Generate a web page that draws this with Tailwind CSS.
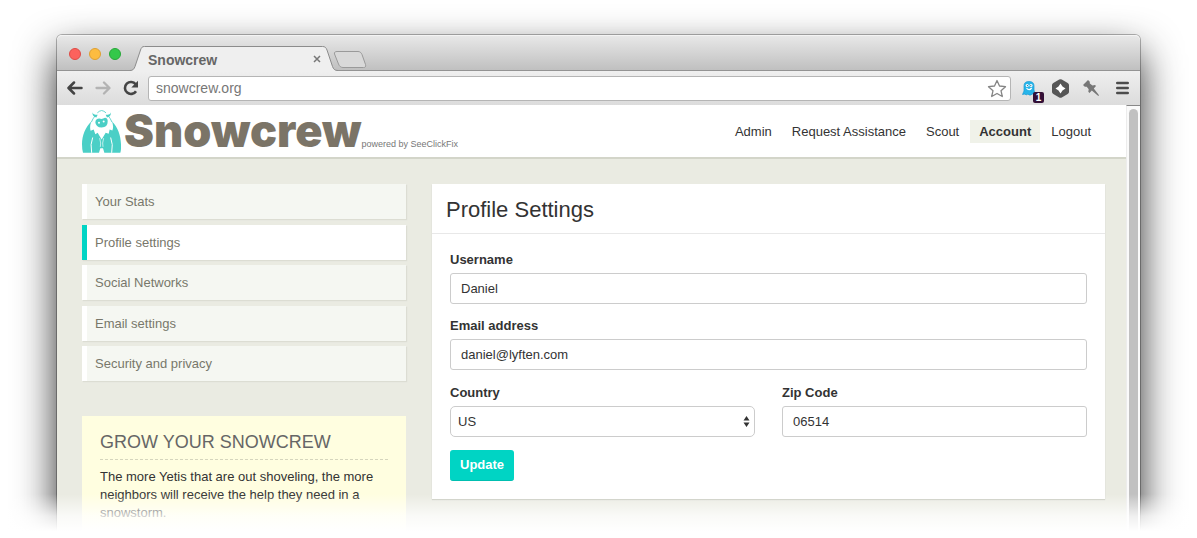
<!DOCTYPE html>
<html lang="en">
<head>
<meta charset="utf-8">
<meta name="viewport" content="width=device-width, initial-scale=1">
<title>Snowcrew</title>
<script src="https://cdn.jsdelivr.net/npm/@tailwindcss/browser@4"></script>
</head>
<body class="relative h-screen overflow-hidden bg-white px-[57px] pt-[35px] font-['Liberation_Sans',Arial,sans-serif] text-[13px] text-[#333]">

<div class="flex h-full flex-col rounded-t-[5px] bg-[#eaebe2] shadow-[0_18px_40px_rgba(0,0,0,0.85),0_0_0_1px_rgba(0,0,0,0.28)]">

  <!-- Title bar -->
  <div class="flex h-9 shrink-0 items-start rounded-t-[5px] border-b border-[#939393] bg-linear-to-b from-[#e9e9e9] to-[#c0c0c0] pl-3 shadow-[inset_0_1px_0_#f4f4f4]">
    <div class="flex gap-2 pt-[13px]">
      <span class="size-3 rounded-full border border-[#de4c46] bg-[#fc625d]"></span>
      <span class="size-3 rounded-full border border-[#dfa032] bg-[#fdbc40]"></span>
      <span class="size-3 rounded-full border border-[#27a838] bg-[#34c84a]"></span>
    </div>
    <div class="relative mt-[11px] ml-[9px] flex h-[25px] w-[208px] items-center justify-between pr-[17px] pl-[18px]">
      <svg class="absolute inset-0 h-full w-full" viewBox="0 0 208 25" aria-hidden="true">
        <path d="M0 25V24.500C3 24.500 4 23 5 20.500L10.500 4C11.500 1.500 12 .5 14.500 .5H192.500C195 .5 196 1.500 197 4L202.500 20.500C203.500 23 204.500 24.500 208 24.500V25Z" fill="#efefef"/>
        <path d="M0 24.500C3 24.500 4 23 5 20.500L10.500 4C11.500 1.500 12 .5 14.500 .5H192.500C195 .5 196 1.500 197 4L202.500 20.500C203.500 23 204.500 24.500 208 24.500" fill="none" stroke="#8c8c8c"/>
      </svg>
      <span class="relative pt-[3px] text-sm font-bold text-[#666]">Snowcrew</span>
      <button type="button" aria-label="Close tab" class="relative">
        <svg class="size-2" viewBox="0 0 8 8"><path d="M1 1L7 7M7 1L1 7" stroke="#777" stroke-width="1.500"/></svg>
      </button>
    </div>
    <button type="button" aria-label="New tab" class="mt-4 -ml-[5px]">
      <svg class="h-[17px] w-[34px]" viewBox="0 0 34 17"><path d="M4 .5H25C27 .5 28 1.500 29 3.500L32.500 13.500C33 15.500 32.500 16.500 30.500 16.500H10C8 16.500 6.500 15.500 5.500 13L1.500 3C1 1.500 2 .5 4 .5Z" fill="#d9d9d9" stroke="#9a9a9a"/></svg>
    </button>
  </div>

  <!-- Toolbar -->
  <div class="flex h-[34px] shrink-0 items-center bg-linear-to-b from-[#efefef] to-[#dcdcdc] pr-[11px] pl-[10px]">
    <div class="flex gap-3">
      <button type="button" aria-label="Back"><svg class="size-4" viewBox="0 0 16 16" fill="none" stroke="#444" stroke-width="2.500" stroke-linecap="round" stroke-linejoin="round"><path d="M7 2.500L1.500 8L7 13.500M2 8H14.500"/></svg></button>
      <button type="button" aria-label="Forward"><svg class="size-4" viewBox="0 0 16 16" fill="none" stroke="#b3b3b3" stroke-width="2.300" stroke-linecap="round" stroke-linejoin="round"><path d="M9 2.500L14.500 8L9 13.500M14 8H1.500"/></svg></button>
      <button type="button" aria-label="Reload"><svg class="size-4" viewBox="0 0 16 16"><path d="M12.700 4.300A6 6 0 1 0 13 11.200" fill="none" stroke="#444" stroke-width="2.600"/><path d="M15 .8V7.500H8.300Z" fill="#444"/></svg></button>
    </div>
    <div class="mr-[11px] ml-[9px] flex h-[25px] flex-1 items-center rounded-[3px] border border-[#b5b5b5] bg-white pr-[3px] pl-[7px]">
      <input type="text" aria-label="Address" value="snowcrew.org" class="min-w-0 flex-1 bg-transparent text-sm text-[#777] outline-none">
      <button type="button" aria-label="Bookmark this page"><svg class="h-[19px] w-5" viewBox="0 0 20 19"><path d="M10 1.500L12.500 7L18.500 7.700L14 11.700L15.300 17.500L10 14.500L4.700 17.500L6 11.700L1.500 7.700L7.500 7Z" fill="#fff" stroke="#858585" stroke-width="1.300" stroke-linejoin="round"/></svg></button>
    </div>
    <button type="button" aria-label="Ghost extension, 1 alert" class="relative mr-[14px]">
      <svg class="h-[15px] w-4" viewBox="0 0 16 15"><path d="M2 5C2 2 3.500 .5 7 .5S12 2 12 5V9L13 13H10L9 14H7L6 13L4 14L3 13L.5 13.500L2 10Z" fill="#27b5ea" stroke="#1b9ad2" stroke-width=".7"/><circle cx="5.200" cy="4.500" r="1.500" fill="#fff"/><circle cx="9" cy="4.500" r="1.500" fill="#fff"/><circle cx="5.400" cy="4.600" r=".6" fill="#14607f"/><circle cx="8.800" cy="4.600" r=".6" fill="#14607f"/><path d="M4.500 7Q7 10.300 9.700 7" fill="none" stroke="#fff" stroke-width="1.200"/></svg>
      <span class="absolute top-[11px] left-[11px] h-[11px] w-[11px] rounded-[2px] bg-[#330f36] text-center text-[10px] leading-[11px] font-bold text-white">1</span>
    </button>
    <button type="button" aria-label="Hexagon extension" class="mr-[14px]"><svg class="h-[19px] w-[17px]" viewBox="0 0 17 19"><path d="M7.200 .6Q8.500 0 9.800 .6L15.700 4Q17 4.800 17 6V13Q17 14.200 15.700 15L9.800 18.400Q8.500 19 7.200 18.400L1.300 15Q0 14.200 0 13V6Q0 4.800 1.300 4Z" fill="#565656"/><path d="M8.500 4.500L10.500 7.500L13.500 9.500L10.500 11.500L8.500 14.500L6.500 11.500L3.500 9.500L6.500 7.500Z" fill="#fff"/></svg></button>
    <button type="button" aria-label="Pin extension" class="mr-[17px]"><svg class="size-4" viewBox="0 0 16 16"><path d="M5 0L6.800 1.800V3.500L9.500 5.500L12 5L13 6L10.800 8.600L16 15.300L15.300 16L8.800 10.600L6.500 13L5.300 11.800L5.700 9.300L3.700 6.700H1.800L0 5Z" fill="#777"/></svg></button>
    <button type="button" aria-label="Menu"><svg class="h-[14px] w-[13px]" viewBox="0 0 13 14"><path d="M1.300 2H11.700M1.300 7H11.700M1.300 12H11.700" stroke="#4c4c4c" stroke-width="2.600" stroke-linecap="round"/></svg></button>
  </div>

  <div class="flex min-h-0 flex-1">
    <div class="min-w-0 flex-1">
      <!-- Site header -->
      <header class="flex h-[54px] items-center justify-between border-b-2 border-[#d3d5c9] bg-white pr-[26px] pl-[25px]">
        <a href="#" class="flex items-center" aria-label="Snowcrew, powered by SeeClickFix">
          <svg class="h-[43px] w-[39px]" viewBox="66 30 117 128" aria-hidden="true">
            <path d="M94 66Q98 56 106 46M112 38Q118 32 125 31Q132 32 138 38M144 46Q152 56 156 66" fill="none" stroke="#4bcfc6" stroke-width="2.500"/>
            <path d="M98 36Q98 44 113 44L109 52Q95 48 98 36ZM152 36Q152 44 137 44L141 52Q155 48 152 36Z" fill="#4bcfc6"/>
            <path d="M94 64C76 82 66 106 66 132Q66 148 69 158H117Q119 150 121 144H129Q131 150 133 158H181Q184 148 183 132C182 106 174 82 156 64Q162 80 157 91L149 88L146 101L137 98L125 118L113 98L106 102L101 88L92 92Q88 80 94 64Z" fill="#4bcfc6"/>
            <path d="M98 112Q90 132 95 158M152 112Q160 132 155 158" fill="none" stroke="#fff" stroke-width="3"/>
            <path d="M119 114Q124 130 121 140M131 114Q126 130 129 140" fill="none" stroke="#fff" stroke-width="2"/>
            <path d="M106 66Q107 55 118 55Q126 58 135 53Q144 54 143 65Q143 82 125 82Q107 81 106 66Z" fill="#4bcfc6"/>
            <circle cx="117" cy="68" r="3" fill="#fff"/><circle cx="131" cy="64" r="3" fill="#fff"/>
          </svg>
          <span class="ml-[3px] flex items-baseline">
            <span class="font-['Inter','Liberation_Sans',sans-serif] text-[45px] leading-[44px] font-black text-[#7b7467]">Snowcrew</span>
            <span class="text-[9px] text-[#777]">powered by SeeClickFix</span>
          </span>
        </a>
        <nav class="flex gap-[2px] leading-[23px]">
          <a href="#" class="px-[9px]">Admin</a>
          <a href="#" class="px-[9px]">Request Assistance</a>
          <a href="#" class="px-[9px]">Scout</a>
          <a href="#" class="bg-[#f0f2e9] px-[9px] font-bold" aria-current="page">Account</a>
          <a href="#" class="px-[9px]">Logout</a>
        </nav>
      </header>

      <div class="flex items-start gap-[26px] pt-[25px] pr-[21px] pl-[25px]">
        <!-- Sidebar -->
        <aside class="w-[324px] shrink-0">
          <nav class="flex h-[197px] flex-col justify-between text-[#78776b]">
            <a href="#" class="border-l-[5px] border-white bg-[#f5f7f2] pl-2 leading-[35px] shadow-[1px_1px_1px_#dcddd3]">Your Stats</a>
            <a href="#" class="border-l-[5px] border-[#00d4c4] bg-white pl-2 leading-[35px] shadow-[1px_1px_1px_#dcddd3]" aria-current="page">Profile settings</a>
            <a href="#" class="border-l-[5px] border-white bg-[#f5f7f2] pl-2 leading-[35px] shadow-[1px_1px_1px_#dcddd3]">Social Networks</a>
            <a href="#" class="border-l-[5px] border-white bg-[#f5f7f2] pl-2 leading-[35px] shadow-[1px_1px_1px_#dcddd3]">Email settings</a>
            <a href="#" class="border-l-[5px] border-white bg-[#f5f7f2] pl-2 leading-[35px] shadow-[1px_1px_1px_#dcddd3]">Security and privacy</a>
          </nav>
          <section class="mt-[35px] bg-[#fffee0] px-[18px] pt-[15px] pb-4 leading-[18px]">
            <h2 class="mb-2 border-b border-dashed border-[#d5d5bd] pb-[6px] text-[18px] leading-[22px] text-[#666]">GROW YOUR SNOWCREW</h2>
            <p>The more Yetis that are out shoveling, the more neighbors will receive the help they need in a snowstorm.</p>
          </section>
        </aside>

        <!-- Profile panel -->
        <main class="min-w-0 flex-1 bg-white shadow-[0_1px_1px_#c9cbc0]">
          <h1 class="border-b border-[#e8e8e8] px-[14px] pt-[2px] text-[22px] leading-[47px]">Profile Settings</h1>
          <form class="px-[18px] pt-[17px] pb-[18px]">
            <label for="username" class="block pb-1 leading-[18px] font-bold">Username</label>
            <input id="username" type="text" value="Daniel" class="mb-[13px] block h-[31px] w-full rounded-[3px] border border-[#ccc] bg-white px-[10px]">
            <label for="email" class="block pb-1 leading-[18px] font-bold">Email address</label>
            <input id="email" type="email" value="daniel@lyften.com" class="mb-[14px] block h-[31px] w-full rounded-[3px] border border-[#ccc] bg-white px-[10px]">
            <div class="mb-[13px] grid grid-cols-2 gap-[27px]">
              <div>
                <label for="country" class="block pb-1 leading-[18px] font-bold">Country</label>
                <div class="relative">
                  <select id="country" class="block h-[31px] w-full appearance-none rounded-[5px] border border-[#ccc] bg-white px-[7px]"><option>US</option></select>
                  <svg class="pointer-events-none absolute top-[10px] right-[5px] h-[11px] w-[7px]" viewBox="0 0 7 11" aria-hidden="true"><path d="M3.500 0L6.500 4.500H.5ZM3.500 11L6.500 6.500H.5Z" fill="#333"/></svg>
                </div>
              </div>
              <div>
                <label for="zip" class="block pb-1 leading-[18px] font-bold">Zip Code</label>
                <input id="zip" type="text" value="06514" class="block h-[31px] w-full rounded-[3px] border border-[#ccc] bg-white px-[10px]">
              </div>
            </div>
            <button type="submit" class="h-[31px] rounded-[3px] border-b border-[#00bfb0] bg-[#00d4c4] px-[10px] font-bold text-white">Update</button>
          </form>
        </main>
      </div>
    </div>

    <!-- Scrollbar -->
    <div class="w-[14px] border-t border-l border-t-[#888] border-l-[#ececec] bg-[#fafafa] px-[2px] pt-[3px]">
      <div class="h-full rounded-t-full bg-[#c1c1c1]"></div>
    </div>
  </div>
</div>

<!-- Bottom fade -->
<div class="pointer-events-none absolute inset-x-0 bottom-0 h-11 bg-linear-to-b from-white/0 via-white/75 via-50% to-white to-85%"></div>
</body>
</html>
